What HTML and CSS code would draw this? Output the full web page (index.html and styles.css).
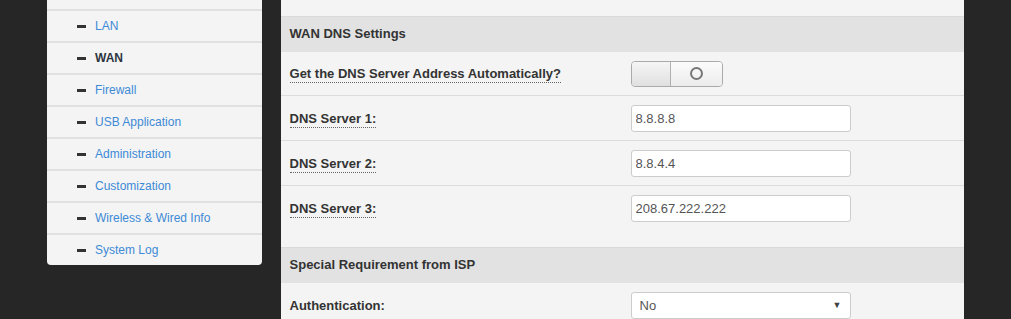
FILE: index.html
```html
<!DOCTYPE html>
<html lang="en">
<head>
    <meta charset="UTF-8">
    <title>WAN - Internet Connection</title>
    <link rel="stylesheet" href="styles.css">
</head>
<body>

<div class="layout">
    <div class="sidebar">
        <ul class="menu">
            <li class="menu-item spacer"></li>
            <li class="menu-item"><span class="dash"></span><a href="#">LAN</a></li>
            <li class="menu-item active"><span class="dash"></span><a href="#">WAN</a></li>
            <li class="menu-item"><span class="dash"></span><a href="#">Firewall</a></li>
            <li class="menu-item"><span class="dash"></span><a href="#">USB Application</a></li>
            <li class="menu-item"><span class="dash"></span><a href="#">Administration</a></li>
            <li class="menu-item"><span class="dash"></span><a href="#">Customization</a></li>
            <li class="menu-item"><span class="dash"></span><a href="#">Wireless &amp; Wired Info</a></li>
            <li class="menu-item"><span class="dash"></span><a href="#">System Log</a></li>
        </ul>
    </div>

    <div class="main">
        <div class="section">
            <div class="section-title">WAN DNS Settings</div>
            <div class="form-row first">
                <div class="label"><span class="hint">Get the DNS Server Address Automatically?</span></div>
                <div class="value">
                    <div class="toggle">
                        <span class="toggle-knob"></span>
                        <span class="toggle-off"><span class="ring"></span></span>
                    </div>
                </div>
            </div>
            <div class="form-row">
                <div class="label"><span class="hint">DNS Server 1:</span></div>
                <div class="value"><input class="text-input" type="text" value="8.8.8.8"></div>
            </div>
            <div class="form-row">
                <div class="label"><span class="hint">DNS Server 2:</span></div>
                <div class="value"><input class="text-input" type="text" value="8.8.4.4"></div>
            </div>
            <div class="form-row last">
                <div class="label"><span class="hint">DNS Server 3:</span></div>
                <div class="value"><input class="text-input" type="text" value="208.67.222.222"></div>
            </div>
        </div>

        <div class="section">
            <div class="section-title">Special Requirement from ISP</div>
            <div class="form-row">
                <div class="label">Authentication:</div>
                <div class="value">
                    <div class="select-box">
                        <span>No</span>
                        <span class="arrow">&#9660;</span>
                    </div>
                </div>
            </div>
        </div>
    </div>
</div>

</body>
</html>
```

FILE: styles.css
```css
body {
    margin: 0;
    background: #262626;
    font-family: 'Liberation Sans', Arial, sans-serif;
    color: #333;
    overflow: hidden;
}
.layout {
    display: flex;
    align-items: flex-start;
    gap: 19px;
    padding: 0 47px;
    margin-top: -23px;
}
.sidebar {
    width: 215px;
    background: #f4f4f4;
    border-radius: 0 0 4px 4px;
}
.menu {
    list-style: none;
    margin: 0;
    padding: 0;
}
.menu-item {
    display: flex;
    align-items: center;
    height: 30px;
    border-top: 2px solid #e0e0e0;
    padding-left: 30px;
    font-size: 12px;
}
.menu-item.spacer {
    height: 32px;
    border-top: none;
}
.menu-item a {
    color: #3d8ad6;
    text-decoration: none;
}
.menu-item.active a {
    color: #2b3440;
    font-weight: bold;
}
.dash {
    display: inline-block;
    width: 9px;
    height: 3px;
    background: #333;
    margin-right: 9px;
}
.main {
    width: 685px;
    background: #f4f4f4;
    padding-top: 39px;
    min-height: 400px;
}
.section-title {
    height: 35px;
    line-height: 34px;
    background: #e2e2e2;
    border-top: 1px solid #dadada;
    padding-left: 9px;
    font-size: 13px;
    font-weight: bold;
    color: #333;
}
.form-row {
    display: flex;
    align-items: center;
    height: 44px;
    border-bottom: 1px solid #dcdcdc;
    padding-left: 9px;
    font-size: 13px;
    font-weight: bold;
    color: #333;
}
.form-row.first {
    height: 43px;
}
.form-row.last {
    border-bottom: none;
    margin-bottom: 17px;
}
.label {
    width: 341px;
}
.hint {
    border-bottom: 1px dotted #666;
    padding-bottom: 1px;
}
.value {
    display: flex;
    align-items: center;
}
.text-input {
    box-sizing: border-box;
    width: 220px;
    height: 27px;
    border: 1px solid #ccc;
    border-radius: 3px;
    background: #fff;
    padding: 0 4px;
    font-family: 'Liberation Sans', Arial, sans-serif;
    font-size: 13px;
    color: #555;
    outline: none;
}
.toggle {
    display: flex;
    box-sizing: border-box;
    width: 92px;
    height: 26px;
    border: 1px solid #aaa;
    border-radius: 4px;
    overflow: hidden;
}
.toggle-knob {
    width: 38px;
    background: linear-gradient(#f5f5f5, #e0e0e0);
    border-right: 1px solid #b0b0b0;
    box-shadow: 1px 0 2px rgba(0, 0, 0, 0.15);
}
.toggle-off {
    flex: 1;
    display: flex;
    align-items: center;
    justify-content: center;
    background: linear-gradient(#fbfbfb, #ececec);
}
.ring {
    box-sizing: border-box;
    width: 13px;
    height: 13px;
    border: 2px solid #777;
    border-radius: 50%;
}
.select-box {
    box-sizing: border-box;
    display: flex;
    align-items: center;
    justify-content: space-between;
    width: 220px;
    height: 27px;
    border: 1px solid #ccc;
    border-radius: 3px;
    background: #fff;
    padding: 0 8px;
    font-weight: normal;
    font-size: 13px;
    color: #555;
}
.arrow {
    font-size: 9px;
    color: #444;
}
```
